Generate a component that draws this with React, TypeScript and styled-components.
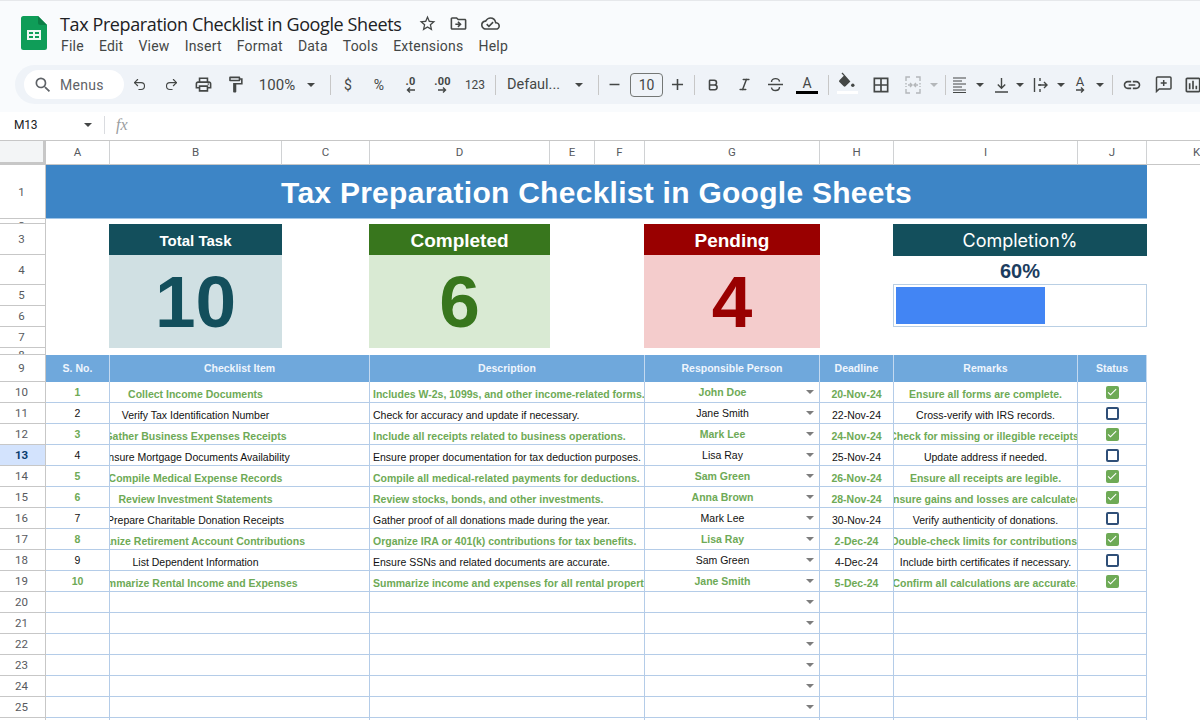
import React from "react";
import styled, { createGlobalStyle, css } from "styled-components";
import { Undo2, Redo2, Bold, Italic } from "lucide-react";
import {
  MdOutlineLocalPrintshop,
  MdOutlineFormatPaint,
  MdBorderAll,
  MdLink,
  MdOutlineInsertChart,
  MdStarBorder,
  MdOutlineDriveFileMove,
  MdOutlineCloudDone,
  MdSearch,
  MdRemove,
  MdAdd,
  MdCheck,
} from "react-icons/md";

const GlobalStyle = createGlobalStyle`
  html, body {
    margin: 0;
    padding: 0;
    background: #fff;
    overflow: hidden;
  }
  #root {
    width: 1200px;
    height: 720px;
    overflow: hidden;
  }
`;

const SHEET_FONT = `"Liberation Sans", Arial, sans-serif`;
const UI_FONT = `"Open Sans", "Noto Sans", sans-serif`;
const LINE = "#b4cce8";
const GREEN = "#6eaa56";

const COLUMNS = ["A", "B", "C", "D", "E", "F", "G", "H", "I", "J", "K"];
const FIXED_ROWS = [54, 5, 31, 30, 21, 21, 21, 7, 27];

const tasks = [
  { item: "Collect Income Documents", desc: "Includes W-2s, 1099s, and other income-related forms.", who: "John Doe", date: "20-Nov-24", note: "Ensure all forms are complete.", done: true },
  { item: "Verify Tax Identification Number", desc: "Check for accuracy and update if necessary.", who: "Jane Smith", date: "22-Nov-24", note: "Cross-verify with IRS records.", done: false },
  { item: "Gather Business Expenses Receipts", desc: "Include all receipts related to business operations.", who: "Mark Lee", date: "24-Nov-24", note: "Check for missing or illegible receipts.", done: true },
  { item: "Ensure Mortgage Documents Availability", desc: "Ensure proper documentation for tax deduction purposes.", who: "Lisa Ray", date: "25-Nov-24", note: "Update address if needed.", done: false },
  { item: "Compile Medical Expense Records", desc: "Compile all medical-related payments for deductions.", who: "Sam Green", date: "26-Nov-24", note: "Ensure all receipts are legible.", done: true },
  { item: "Review Investment Statements", desc: "Review stocks, bonds, and other investments.", who: "Anna Brown", date: "28-Nov-24", note: "Ensure gains and losses are calculated.", done: true },
  { item: "Prepare Charitable Donation Receipts", desc: "Gather proof of all donations made during the year.", who: "Mark Lee", date: "30-Nov-24", note: "Verify authenticity of donations.", done: false },
  { item: "Organize Retirement Account Contributions", desc: "Organize IRA or 401(k) contributions for tax benefits.", who: "Lisa Ray", date: "2-Dec-24", note: "Double-check limits for contributions.", done: true },
  { item: "List Dependent Information", desc: "Ensure SSNs and related documents are accurate.", who: "Sam Green", date: "4-Dec-24", note: "Include birth certificates if necessary.", done: false },
  { item: "Summarize Rental Income and Expenses", desc: "Summarize income and expenses for all rental properties.", who: "Jane Smith", date: "5-Dec-24", note: "Confirm all calculations are accurate.", done: true },
];

const Page = styled.div`
  width: 1200px;
  height: 720px;
  overflow: hidden;
  display: flex;
  flex-direction: column;
  font-family: ${UI_FONT};
`;

const Header = styled.header`
  height: 112px;
  flex: none;
  box-sizing: border-box;
  background: #f9fbfd;
  border-top: 1px solid #e6e8eb;
  overflow: hidden;
`;

const TitleBar = styled.div`
  display: flex;
  height: 64px;
  box-sizing: border-box;
  padding: 12px 0 0 21px;
  gap: 13px;
`;

const LogoWrap = styled.div`
  padding-top: 3px;
`;

const TitleBlock = styled.div`
  display: flex;
  flex-direction: column;
`;

const TitleLine = styled.div`
  display: flex;
  align-items: center;
  height: 21px;
  color: #1f1f1f;
`;

const DocName = styled.span`
  font-size: 18px;
  letter-spacing: -0.39px;
  color: #202124;
  margin-right: 10px;
`;

const TitleIcon = styled.span`
  display: flex;
  width: 31.5px;
  justify-content: center;
  color: #444746;
  font-size: 19px;
`;

const MenuBar = styled.nav`
  display: flex;
  gap: 15.1px;
  margin-top: 4px;
  padding-left: 1px;
`;

const MenuItem = styled.span`
  font-family: Roboto, sans-serif;
  font-size: 14px;
  letter-spacing: 0.2px;
  color: #444746;
`;

const Toolbar = styled.div`
  display: flex;
  align-items: center;
  height: 39px;
  margin-left: 15px;
  width: 1230px;
  border-radius: 20px 0 0 20px;
  background: #eff3f8;
  color: #444746;
  overflow: hidden;
`;

const SearchPill = styled.div`
  display: flex;
  align-items: center;
  width: 100px;
  height: 29px;
  flex: none;
  box-sizing: border-box;
  margin-left: 9px;
  padding-left: 9px;
  gap: 7px;
  border-radius: 15px;
  background: #fff;
  font-family: Roboto, sans-serif;
  font-size: 14px;
  letter-spacing: 0.3px;
  color: #5f6368;
`;

const Slot = styled.div<{ $w: number; $size?: number; $dim?: boolean; $lift?: number }>`
  display: flex;
  flex: none;
  align-items: center;
  justify-content: center;
  position: relative;
  box-sizing: border-box;
  width: ${(p) => p.$w}px;
  height: 100%;
  padding-bottom: ${(p) => p.$lift || 0}px;
  font-size: ${(p) => p.$size || 19}px;
  color: ${(p) => (p.$dim ? "#b4b7ba" : "#444746")};
  font-family: Roboto, sans-serif;
`;

const ToolDivider = styled.div<{ $l: number; $r?: number }>`
  flex: none;
  width: 1px;
  height: 20px;
  margin: 0 ${(p) => p.$r || 0}px 0 ${(p) => p.$l}px;
  background: #c7c7c7;
`;

const Caret = styled.i<{ $color?: string }>`
  display: block;
  flex: none;
  width: 0;
  height: 0;
  border-left: 4px solid transparent;
  border-right: 4px solid transparent;
  border-top: 4px solid ${(p) => p.$color || "#444746"};
`;

const FontBox = styled.div`
  display: flex;
  flex: none;
  align-items: center;
  justify-content: center;
  width: 33px;
  height: 24px;
  margin-left: 1px;
  box-sizing: border-box;
  border: 1px solid #747775;
  border-radius: 4px;
  font-family: Roboto, sans-serif;
  font-size: 14px;
  color: #444746;
`;

const ColorBar = styled.span<{ $bg: string; $w: number }>`
  position: absolute;
  left: 50%;
  top: 26px;
  width: ${(p) => p.$w}px;
  height: 3px;
  margin-left: ${(p) => -p.$w / 2}px;
  background: ${(p) => p.$bg};
`;

const LetterA = styled.span`
  font-family: Roboto, sans-serif;
  font-size: 14px;
  margin-top: -4px;
  color: #444746;
`;

const DecimalMark = styled.div`
  display: flex;
  flex-direction: column;
  align-items: center;
  font-family: Roboto, sans-serif;
  font-size: 11px;
  font-weight: 700;
  line-height: 10px;
  letter-spacing: 0.2px;
`;

const RotateMark = styled.div`
  display: flex;
  flex-direction: column;
  align-items: center;
  font-family: Roboto, sans-serif;
  font-size: 13px;
  line-height: 11px;
`;

const FormulaBar = styled.div`
  display: flex;
  flex: none;
  align-items: center;
  height: 29px;
  box-sizing: border-box;
  padding-bottom: 2px;
  background: #fff;
  border-bottom: 1px solid #c7c7c7;
`;

const CellName = styled.div`
  width: 70px;
  padding-left: 14px;
  font-family: Roboto, sans-serif;
  font-size: 12px;
  letter-spacing: -0.2px;
  color: #202124;
`;

const FormulaDivider = styled.div`
  width: 1px;
  height: 18px;
  margin: 0 11px 0 12px;
  background: #dadce0;
`;

const FxMark = styled.span`
  font-family: "Liberation Serif", serif;
  font-style: italic;
  font-size: 16px;
  color: #9a9da0;
`;

const Sheet = styled.div`
  display: grid;
  grid-template-columns: 46px 64px 172px 88px 180px 45px 50px 175px 74px 184px 69px 100px;
  grid-template-rows: 24px ${FIXED_ROWS.map((h) => `${h}px`).join(" ")} repeat(17, 21px);
  font-family: ${SHEET_FONT};
  background: #fff;
`;

type Spot = { $c: number; $r: number; $cs?: number; $rs?: number };

const spot = css<Spot>`
  grid-column: ${(p) => p.$c} / span ${(p) => p.$cs || 1};
  grid-row: ${(p) => p.$r} / span ${(p) => p.$rs || 1};
  min-width: 0;
  min-height: 0;
`;

const Corner = styled.div`
  grid-column: 1;
  grid-row: 1;
  box-sizing: border-box;
  background: #f3f5f6;
  border-right: 3px solid #c7c7c7;
  border-bottom: 3px solid #c7c7c7;
`;

const ColLabel = styled.div<Spot>`
  ${spot}
  display: flex;
  align-items: center;
  justify-content: center;
  box-sizing: border-box;
  padding-bottom: 1px;
  border-right: 1px solid #d0d2d4;
  border-bottom: 1px solid #c7c7c7;
  font-family: Roboto, sans-serif;
  font-size: 11.5px;
  color: #575a5e;
`;

const RowLabel = styled.div<Spot & { $active?: boolean; $thin?: boolean }>`
  ${spot}
  display: flex;
  align-items: ${(p) => (p.$thin ? "flex-start" : "center")};
  justify-content: center;
  overflow: hidden;
  box-sizing: border-box;
  padding-right: 2px;
  border-bottom: 1px solid #c7c7c7;
  border-right: 1px solid #c7c7c7;
  background: ${(p) => (p.$active ? "#d3e3fd" : "#fff")};
  font-family: Roboto, sans-serif;
  font-size: 11.5px;
  font-weight: ${(p) => (p.$active ? 700 : 400)};
  color: ${(p) => (p.$active ? "#0b3d6e" : "#575a5e")};
`;

const TitleBand = styled.div<Spot>`
  ${spot}
  display: flex;
  align-items: center;
  justify-content: center;
  box-sizing: border-box;
  padding-top: 3px;
  background: #3d85c6;
  border-bottom: 1px solid #9fc5e8;
  color: #fff;
  font-size: 30px;
  font-weight: 700;
  letter-spacing: 0.27px;
`;

const KpiCard = styled.div<Spot & { $tint: string }>`
  ${spot}
  display: flex;
  flex-direction: column;
  margin-left: -1px;
  background: ${(p) => p.$tint};
`;

const KpiHead = styled.div<{ $ink: string; $size: number }>`
  display: flex;
  flex: none;
  align-items: center;
  justify-content: center;
  box-sizing: border-box;
  height: 31px;
  padding-top: 2px;
  background: ${(p) => p.$ink};
  color: #fff;
  font-size: ${(p) => p.$size}px;
  font-weight: 700;
`;

const KpiValue = styled.div<{ $ink: string }>`
  display: flex;
  flex: 1;
  align-items: center;
  justify-content: center;
  color: ${(p) => p.$ink};
  font-size: 73px;
  font-weight: 700;
`;

const ProgressCard = styled.div<Spot>`
  ${spot}
  display: flex;
  flex-direction: column;
  margin-left: -1px;
`;

const ProgressHead = styled.div`
  display: flex;
  flex: none;
  align-items: center;
  justify-content: center;
  height: 32px;
  background: #134f5c;
  color: #fff;
  font-family: Inter, sans-serif;
  font-size: 18px;
`;

const ProgressValue = styled.div`
  height: 28px;
  line-height: 31px;
  text-align: center;
  color: #1c3d5f;
  font-size: 20px;
  font-weight: 700;
`;

const ProgressTrack = styled.div`
  height: 43px;
  box-sizing: border-box;
  padding: 2px;
  border: 1px solid #b9cfe4;
`;

const ProgressFill = styled.div`
  height: 100%;
  background: #4285f4;
`;

const HeadCell = styled.div<Spot>`
  ${spot}
  display: flex;
  align-items: center;
  justify-content: center;
  box-sizing: border-box;
  padding-bottom: 2px;
  background: #6fa8dc;
  border-right: 1px solid #c3d9f0;
  color: #eef5fc;
  font-size: 10.5px;
  font-weight: 700;
`;

const Cell = styled.div<Spot & { $done?: boolean; $low?: boolean; $pad?: number }>`
  ${spot}
  display: flex;
  align-items: center;
  justify-content: center;
  overflow: hidden;
  white-space: nowrap;
  box-sizing: border-box;
  padding-top: ${(p) => (p.$low ? 3 : 0)}px;
  padding-right: ${(p) => p.$pad || 0}px;
  border-right: 1px solid ${LINE};
  border-bottom: 1px solid ${LINE};
  font-size: 10.5px;
  font-weight: ${(p) => (p.$done ? 700 : 400)};
  color: ${(p) => (p.$done ? GREEN : "#111")};
`;

const TextCell = styled(Cell)`
  justify-content: flex-start;
  padding-left: 3px;
`;

const PersonCell = styled(Cell)`
  gap: 6px;
  padding-right: 5px;
`;

const PersonName = styled.span`
  flex: 1;
  text-align: center;
`;

const Check = styled.div<{ $on?: boolean }>`
  display: flex;
  align-items: center;
  justify-content: center;
  box-sizing: border-box;
  width: 13px;
  height: 13px;
  border-radius: 2px;
  background: ${(p) => (p.$on ? GREEN : "#fff")};
  border: ${(p) => (p.$on ? "none" : "2px solid #2f4f78")};
  color: #fff;
  font-size: 12px;
`;

const Logo = () => (
  <svg width="26" height="34" viewBox="0 0 26 34" style={{ display: "block" }}>
    <path
      d="M2.5 0H17l9 9v22.5a2.5 2.5 0 0 1-2.5 2.5h-21A2.5 2.5 0 0 1 0 31.500V2.500A2.500 2.500 0 0 1 2.500 0z"
      fill="#0f9d58"
    />
    <path d="M17 0l9 9h-6.500A2.500 2.500 0 0 1 17 6.500z" fill="#0b7f46" />
    <path d="M6 14h14v10H6zm2 2v2h4v-2zm6 0v2h4v-2zm-6 4v2h4v-2zm6 0v2h4v-2z" fill="#f1f8f4" fillRule="evenodd" />
  </svg>
);

const SmallArrow = ({ back }: { back?: boolean }) => (
  <svg width="9" height="6" viewBox="0 0 9 6">
    <path
      d={back ? "M9 3H2M4 .6L1.500 3 4 5.400" : "M0 3h7M5 .6L7.500 3 5 5.400"}
      fill="none"
      stroke="currentColor"
      strokeWidth="1.400"
    />
  </svg>
);

const StrikeIcon = () => (
  <svg width="17" height="17" viewBox="0 0 17 17" fill="none" stroke="#444746" strokeWidth="1.400">
    <path d="M1 8.500h15" />
    <path d="M4.500 6c0-2 1.800-3.400 4-3.400s3.800 1 4 3" />
    <path d="M12.500 11c0 2.200-1.800 3.500-4 3.500s-3.800-1-4-3" />
  </svg>
);

const MergeIcon = () => (
  <svg width="16" height="18" viewBox="0 0 16 18" fill="none" stroke="#b4b7ba" strokeWidth="1.400">
    <path d="M1 5V1h4M11 1h4v4M1 13v4h4M11 17h4v-4" />
    <path d="M1 7v4M15 7v4" strokeDasharray="1.500 1.500" />
    <path d="M3 9h3.500M5 7l2 2-2 2M13 9H9.500M11 7L9 9l2 2" />
  </svg>
);

const AlignIcon = () => (
  <svg width="15" height="16" viewBox="0 0 15 16" stroke="#444746" strokeWidth="1.200">
    <path d="M1 1h13M1 4h9M1 7h13M1 10h9M1 13h13M1 15.500h13" />
  </svg>
);

const ValignIcon = () => (
  <svg width="15" height="16" viewBox="0 0 15 16" fill="none" stroke="#444746" strokeWidth="1.400">
    <path d="M7.500 1v10M3.800 7.500l3.700 3.700 3.700-3.700M1 15h13" />
  </svg>
);

const WrapIcon = () => (
  <svg width="18" height="18" viewBox="0 0 18 18" fill="none" stroke="#444746" strokeWidth="1.400">
    <path d="M2.500 2v14M8 2v3M8 8v2M8 13v3M6 9h9M12 6l3 3-3 3" />
  </svg>
);

const FillIcon = () => (
  <svg width="20" height="20" viewBox="0 0 20 20" fill="#444746">
    <path d="M5.500 0.500l-1 1 2.300 2.300L2.400 8.200a1.300 1.300 0 0 0 0 1.800l4.300 4.300a1.300 1.300 0 0 0 1.800 0l4.900-4.900z" />
    <circle cx="15.800" cy="13.200" r="1.700" />
  </svg>
);

const CommentIcon = () => (
  <svg width="17" height="17" viewBox="0 0 17 17" fill="none" stroke="#444746" strokeWidth="1.500">
    <path d="M1.500 15.500V2a1 1 0 0 1 1-1H15a1 1 0 0 1 1 1v10a1 1 0 0 1-1 1H4.200z" />
    <path d="M8.700 4v6M5.700 7h6" />
  </svg>
);

const ToolbarRow = () => (
  <Toolbar>
    <SearchPill>
      <MdSearch size={20} />
      Menus
    </SearchPill>
    <Slot $w={31}><Undo2 size={15} strokeWidth={1.8} /></Slot>
    <Slot $w={32}><Redo2 size={15} strokeWidth={1.8} /></Slot>
    <Slot $w={32}><MdOutlineLocalPrintshop /></Slot>
    <Slot $w={32}><MdOutlineFormatPaint /></Slot>
    <Slot $w={52} $size={15}>100%</Slot>
    <Slot $w={16}><Caret /></Slot>
    <ToolDivider $l={11} $r={2} />
    <Slot $w={30} $size={14}>$</Slot>
    <Slot $w={32} $size={14}>%</Slot>
    <Slot $w={31}>
      <DecimalMark>.0<SmallArrow back /></DecimalMark>
    </Slot>
    <Slot $w={33}>
      <DecimalMark>.00<SmallArrow /></DecimalMark>
    </Slot>
    <Slot $w={32} $size={12}>123</Slot>
    <ToolDivider $l={4} />
    <Slot $w={75} $size={14.5}>Defaul...</Slot>
    <Slot $w={16}><Caret /></Slot>
    <ToolDivider $l={11} />
    <Slot $w={30} $size={17}><MdRemove /></Slot>
    <FontBox>10</FontBox>
    <Slot $w={28} $size={19}><MdAdd /></Slot>
    <ToolDivider $l={3} $r={2} />
    <Slot $w={32}><Bold size={14} strokeWidth={2.7} /></Slot>
    <Slot $w={30}><Italic size={15} strokeWidth={2.4} /></Slot>
    <Slot $w={32}><StrikeIcon /></Slot>
    <Slot $w={32}>
      <LetterA>A</LetterA>
      <ColorBar $bg="#000" $w={22} />
    </Slot>
    <ToolDivider $l={5} />
    <Slot $w={36} $lift={6}>
      <FillIcon />
      <ColorBar $bg="#fff" $w={21} />
    </Slot>
    <Slot $w={32} $size={20}><MdBorderAll /></Slot>
    <Slot $w={32} $dim><MergeIcon /></Slot>
    <Slot $w={10}><Caret $color="#b4b7ba" /></Slot>
    <ToolDivider $l={6} />
    <Slot $w={26}><AlignIcon /></Slot>
    <Slot $w={16}><Caret /></Slot>
    <Slot $w={26}><ValignIcon /></Slot>
    <Slot $w={12}><Caret /></Slot>
    <Slot $w={30}><WrapIcon /></Slot>
    <Slot $w={10}><Caret /></Slot>
    <Slot $w={28}>
      <RotateMark>A<SmallArrow /></RotateMark>
    </Slot>
    <Slot $w={12}><Caret /></Slot>
    <ToolDivider $l={6} $r={3} />
    <Slot $w={32} $size={20}><MdLink /></Slot>
    <Slot $w={30}><CommentIcon /></Slot>
    <Slot $w={30} $size={20}><MdOutlineInsertChart /></Slot>
  </Toolbar>
);

const App = () => {
  const doneCount = tasks.filter((t) => t.done).length;
  const pct = Math.round((doneCount / tasks.length) * 100);
  const first = 11; // grid line of sheet row 10

  return (
    <Page>
      <GlobalStyle />
      <Header>
        <TitleBar>
          <LogoWrap><Logo /></LogoWrap>
          <TitleBlock>
            <TitleLine>
              <DocName>Tax Preparation Checklist in Google Sheets</DocName>
              <TitleIcon><MdStarBorder /></TitleIcon>
              <TitleIcon><MdOutlineDriveFileMove /></TitleIcon>
              <TitleIcon><MdOutlineCloudDone /></TitleIcon>
            </TitleLine>
            <MenuBar>
              {["File", "Edit", "View", "Insert", "Format", "Data", "Tools", "Extensions", "Help"].map((m) => (
                <MenuItem key={m}>{m}</MenuItem>
              ))}
            </MenuBar>
          </TitleBlock>
        </TitleBar>
        <ToolbarRow />
      </Header>

      <FormulaBar>
        <CellName>M13</CellName>
        <Caret />
        <FormulaDivider />
        <FxMark>fx</FxMark>
      </FormulaBar>

      <Sheet>
        <Corner />
        {COLUMNS.map((c, i) => (
          <ColLabel key={c} $c={i + 2} $r={1}>{c}</ColLabel>
        ))}
        {Array.from({ length: 26 }, (_, i) => (
          <RowLabel
            key={i}
            $c={1}
            $r={i + 2}
            $active={i + 1 === 13}
            $thin={i + 1 === 2 || i + 1 === 8}
          >
            {i < 25 ? i + 1 : ""}
          </RowLabel>
        ))}

        <TitleBand $c={2} $r={2} $cs={10}>Tax Preparation Checklist in Google Sheets</TitleBand>

        <KpiCard $c={3} $r={4} $rs={5} $tint="#d0e0e3">
          <KpiHead $ink="#134f5c" $size={15}>Total Task</KpiHead>
          <KpiValue $ink="#134f5c">{tasks.length}</KpiValue>
        </KpiCard>
        <KpiCard $c={5} $r={4} $rs={5} $tint="#d9ead3">
          <KpiHead $ink="#38761d" $size={19}>Completed</KpiHead>
          <KpiValue $ink="#38761d">{doneCount}</KpiValue>
        </KpiCard>
        <KpiCard $c={8} $r={4} $rs={5} $tint="#f4cccc">
          <KpiHead $ink="#990000" $size={19}>Pending</KpiHead>
          <KpiValue $ink="#990000">{tasks.length - doneCount}</KpiValue>
        </KpiCard>
        <ProgressCard $c={10} $r={4} $cs={2} $rs={5}>
          <ProgressHead>Completion%</ProgressHead>
          <ProgressValue>{pct}%</ProgressValue>
          <ProgressTrack>
            <ProgressFill style={{ width: `${pct}%` }} />
          </ProgressTrack>
        </ProgressCard>

        <HeadCell $c={2} $r={10}>S. No.</HeadCell>
        <HeadCell $c={3} $r={10} $cs={2}>Checklist Item</HeadCell>
        <HeadCell $c={5} $r={10} $cs={3}>Description</HeadCell>
        <HeadCell $c={8} $r={10}>Responsible Person</HeadCell>
        <HeadCell $c={9} $r={10}>Deadline</HeadCell>
        <HeadCell $c={10} $r={10}>Remarks</HeadCell>
        <HeadCell $c={11} $r={10}>Status</HeadCell>

        {Array.from({ length: 17 }, (_, i) => {
          const t = tasks[i];
          const r = first + i;
          return (
            <React.Fragment key={i}>
              <Cell $c={2} $r={r} $done={t?.done}>{t ? i + 1 : ""}</Cell>
              <Cell $c={3} $r={r} $cs={2} $done={t?.done} $low $pad={88}>{t?.item}</Cell>
              <TextCell $c={5} $r={r} $cs={3} $done={t?.done} $low>{t?.desc}</TextCell>
              <PersonCell $c={8} $r={r} $done={t?.done}>
                <PersonName>{t?.who}</PersonName>
                <Caret $color="#7d7d7d" />
              </PersonCell>
              <Cell $c={9} $r={r} $done={t?.done} $low>{t?.date}</Cell>
              <Cell $c={10} $r={r} $done={t?.done} $low>{t?.note}</Cell>
              <Cell $c={11} $r={r}>
                {t && <Check $on={t.done}>{t.done && <MdCheck />}</Check>}
              </Cell>
            </React.Fragment>
          );
        })}
      </Sheet>
    </Page>
  );
};

export default App;
